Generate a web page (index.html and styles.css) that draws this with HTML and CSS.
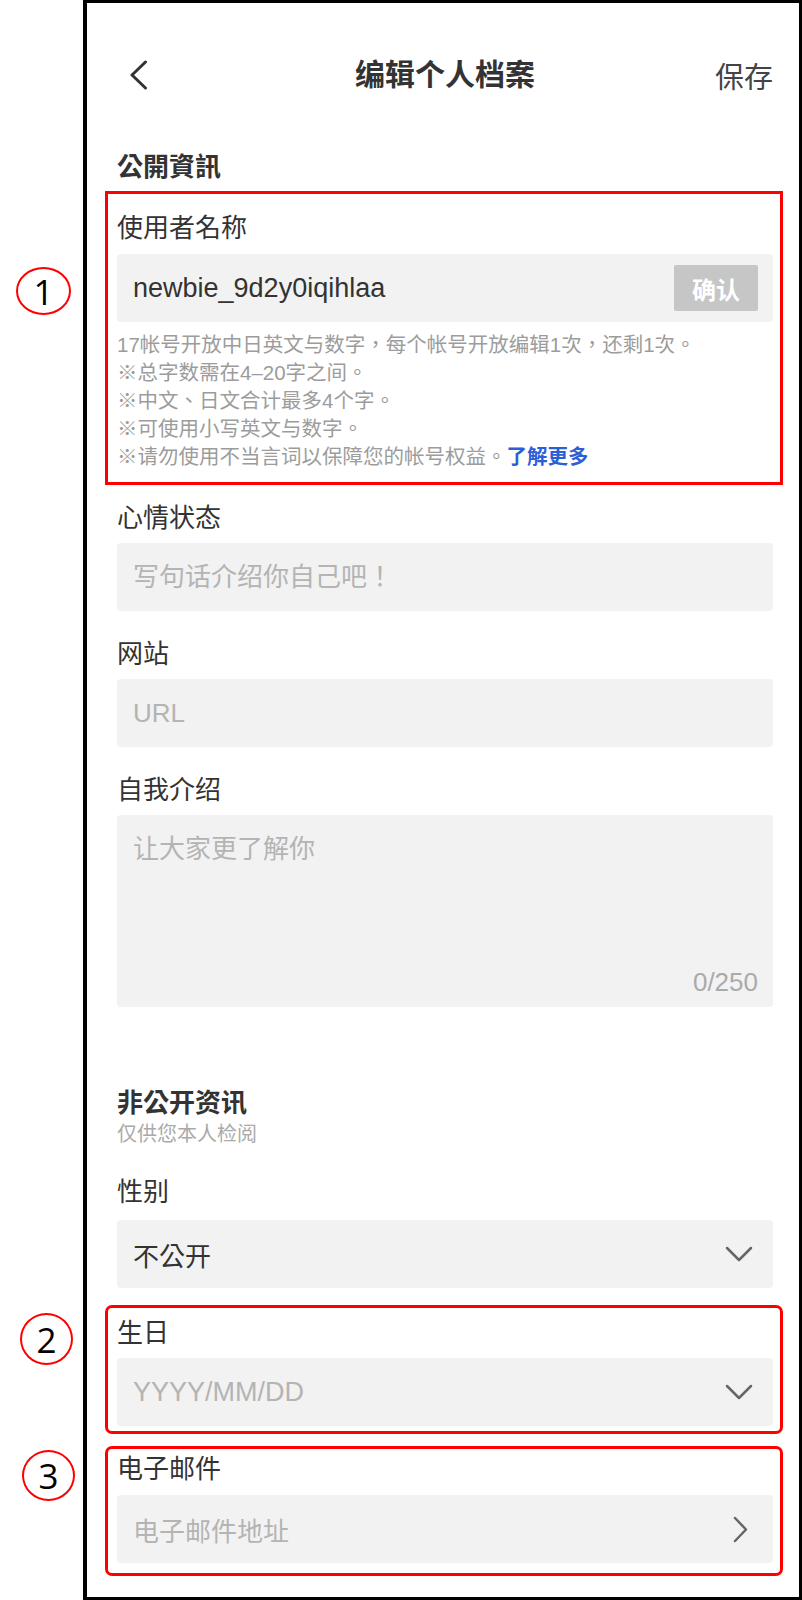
FILE: index.html
```html
<!DOCTYPE html>
<html lang="zh-TW">
<head>
    <meta charset="UTF-8">
    <meta name="viewport" content="width=device-width, initial-scale=1.0">
    <title>编辑个人档案</title>
    <link rel="stylesheet" href="styles.css">
</head>
<body>
    <div class="frame">
        <header class="topbar">
            <span class="back">
                <svg width="19" height="30" viewBox="0 0 19 30"><path d="M16.5 2 L3 15 L16.5 28" fill="none" stroke="#333" stroke-width="3" stroke-linecap="round" stroke-linejoin="round"/></svg>
            </span>
            <h1 class="title">编辑个人档案</h1>
            <span class="save">保存</span>
        </header>

        <h2 class="section-title">公開資訊</h2>

        <div class="mark mark-1">
            <span class="badge badge-1">1</span>
            <div class="label label-loose">使用者名称</div>
            <div class="field field-user">
                <input class="field-input user-value" type="text" value="newbie_9d2y0iqihlaa">
                <button class="confirm">确认</button>
            </div>
            <div class="hints">
                <p>17帐号开放中日英文与数字，每个帐号开放编辑1次，还剩1次。</p>
                <p>※总字数需在4–20字之间。</p>
                <p>※中文、日文合计最多4个字。</p>
                <p>※可使用小写英文与数字。</p>
                <p>※请勿使用不当言词以保障您的帐号权益。<a href="#" class="more">了解更多</a></p>
            </div>
        </div>

        <div class="group group-first">
            <div class="label">心情状态</div>
            <div class="field">
                <input class="field-input" type="text" placeholder="写句话介绍你自己吧！">
            </div>
        </div>

        <div class="group">
            <div class="label">网站</div>
            <div class="field">
                <input class="field-input" type="text" placeholder="URL">
            </div>
        </div>

        <div class="group">
            <div class="label">自我介绍</div>
            <div class="field field-area">
                <textarea class="area-input" placeholder="让大家更了解你"></textarea>
                <span class="counter">0/250</span>
            </div>
        </div>

        <h2 class="section-title section-private">非公开资讯</h2>
        <p class="subtitle">仅供您本人检阅</p>

        <div class="group group-gender">
            <div class="label label-wide">性别</div>
            <div class="field field-select">
                <span>不公开</span>
                <svg width="28" height="16" viewBox="0 0 28 16"><path d="M2 2 L14 14 L26 2" fill="none" stroke="#666" stroke-width="2.5" stroke-linecap="round" stroke-linejoin="round"/></svg>
            </div>
        </div>

        <div class="mark mark-round mark-2">
            <span class="badge badge-2">2</span>
            <div class="label">生日</div>
            <div class="field field-select">
                <span class="placeholder latin">YYYY/MM/DD</span>
                <svg width="28" height="16" viewBox="0 0 28 16"><path d="M2 2 L14 14 L26 2" fill="none" stroke="#666" stroke-width="2.5" stroke-linecap="round" stroke-linejoin="round"/></svg>
            </div>
        </div>

        <div class="mark mark-round mark-3">
            <span class="badge badge-3">3</span>
            <div class="label label-loose">电子邮件</div>
            <div class="field field-select field-link">
                <span class="placeholder">电子邮件地址</span>
                <svg width="15" height="27" viewBox="0 0 15 27"><path d="M2 2 L13 13.5 L2 25" fill="none" stroke="#666" stroke-width="2.5" stroke-linecap="round" stroke-linejoin="round"/></svg>
            </div>
        </div>
    </div>
</body>
</html>
```

FILE: styles.css
```css
body {
    margin: 0;
    background-color: #fff;
    font-family: "Liberation Sans", "Noto Sans CJK TC", sans-serif;
    color: #333;
}

.frame {
    box-sizing: border-box;
    width: 719px;
    height: 1600px;
    margin-left: 83px;
    border: 3px solid #000;
    border-left-width: 4px;
    padding: 0 26px 0 30px;
}

/* header */
.topbar {
    height: 144px;
    display: grid;
    grid-template-columns: 1fr auto 1fr;
    align-items: center;
}

.back {
    display: flex;
    padding-left: 12px;
}

.title {
    margin: 0;
    font-size: 30px;
    font-weight: bold;
    line-height: 40px;
    color: #333;
}

.save {
    justify-self: end;
    font-size: 29px;
    color: #444;
}

.section-title {
    margin: 3px 0 0;
    font-size: 26px;
    font-weight: bold;
    line-height: 34px;
    color: #333;
}

.section-private {
    margin-top: 79px;
}

.subtitle {
    margin: 0;
    font-size: 20px;
    line-height: 28px;
    color: #aaa;
}

/* fields */
.label {
    font-size: 26px;
    line-height: 34px;
    color: #333;
    margin-bottom: 8px;
}

.label-loose {
    margin-bottom: 9px;
}

.label-wide {
    margin-bottom: 11px;
}

.group {
    margin-top: 26px;
}

.group-first {
    margin-top: 16px;
}

.group-gender {
    margin-top: 27px;
}

.field {
    box-sizing: border-box;
    height: 68px;
    display: flex;
    align-items: center;
    padding: 0 20px 0 16px;
    background-color: #f2f2f2;
    border-radius: 4px;
    font-size: 26px;
}

.field-input {
    flex: 1;
    min-width: 0;
    border: none;
    outline: none;
    background: transparent;
    padding: 0;
    font: inherit;
    color: #333;
}

.field-input::placeholder,
.area-input::placeholder {
    color: #b4b4b4;
}

.user-value {
    font-size: 27px;
}

.field-user {
    padding-right: 15px;
}

.confirm {
    width: 84px;
    height: 46px;
    margin-left: 12px;
    border: none;
    border-radius: 2px;
    background-color: #c6c6c6;
    color: #fff;
    font-family: inherit;
    font-size: 24px;
    font-weight: bold;
}

.field-area {
    height: 192px;
    flex-direction: column;
    align-items: stretch;
    padding: 17px 15px 13px 16px;
}

.area-input {
    flex: 1;
    resize: none;
    border: none;
    outline: none;
    background: transparent;
    padding: 0;
    font: inherit;
    line-height: 34px;
    color: #333;
}

.counter {
    align-self: flex-end;
    line-height: 24px;
    color: #aaa;
}

.field-select {
    justify-content: space-between;
    color: #333;
}

.field-link {
    padding-right: 25px;
}

.placeholder {
    color: #b4b4b4;
}

.latin {
    font-size: 27px;
}

.hints {
    margin-top: 9px;
    font-size: 20.5px;
    line-height: 28px;
    color: #9c9c9c;
}

.hints p {
    margin: 0;
}

.more {
    color: #2b5fd6;
    font-weight: bold;
    text-decoration: none;
}

/* red annotation boxes */
.mark {
    position: relative;
    border: 3px solid #f00;
    margin: 7px -10px 0 -12px;
    padding: 17px 7px 11px 9px;
}

.mark-round {
    border-radius: 7px;
}

.mark-2 {
    margin-top: 17px;
    padding-top: 8px;
    padding-bottom: 5px;
}

.mark-3 {
    margin-top: 12px;
    padding-top: 3px;
    padding-bottom: 10px;
}

.badge {
    position: absolute;
    box-sizing: border-box;
    display: flex;
    align-items: center;
    justify-content: center;
    border: 2.5px solid #f00;
    border-radius: 50%;
    font-family: "Open Sans", sans-serif;
    font-size: 35px;
    line-height: 1;
    color: #000;
}

.badge-1 {
    left: -92px;
    top: 73px;
    width: 55px;
    height: 48px;
}

.badge-2 {
    left: -88px;
    top: 5px;
    width: 53px;
    height: 52px;
}

.badge-3 {
    left: -86px;
    top: 1px;
    width: 53px;
    height: 51px;
}
```
